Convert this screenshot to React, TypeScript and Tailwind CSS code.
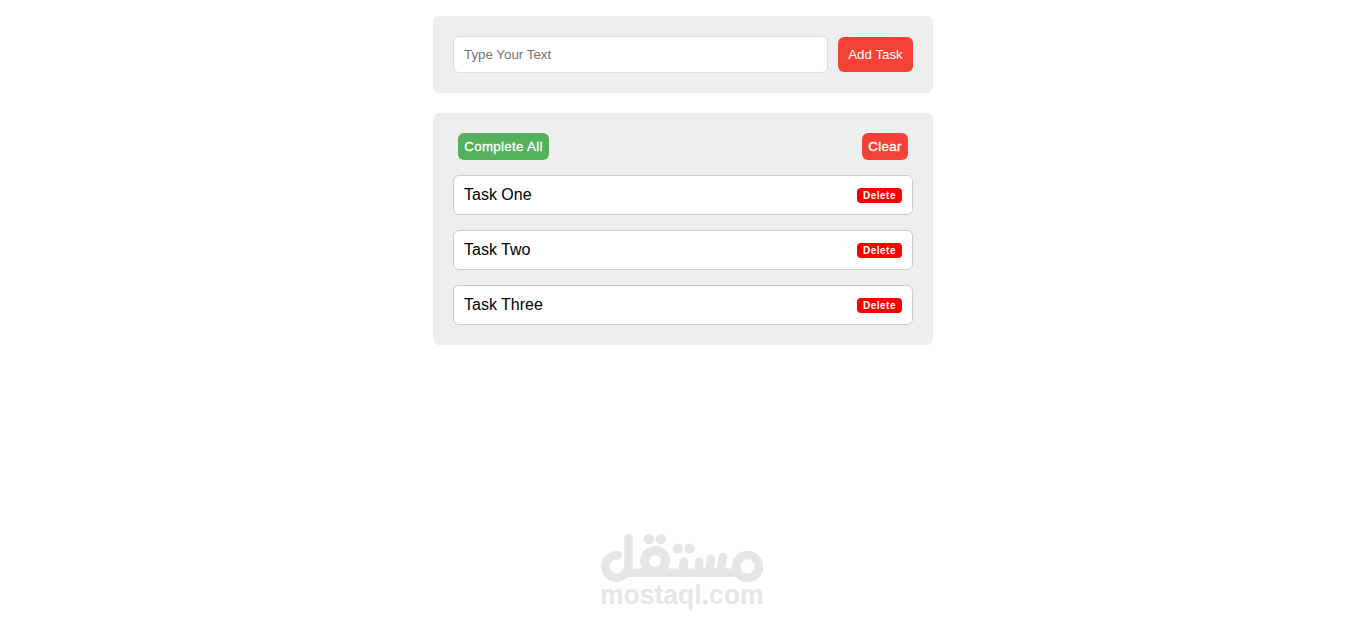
import { useState, FormEvent } from "react";

interface Task {
  id: number;
  title: string;
}

const initialTasks: Task[] = [
  { id: 1, title: "Task One" },
  { id: 2, title: "Task Two" },
  { id: 3, title: "Task Three" },
];

function Watermark() {
  return (
    <svg
      width="166"
      height="80"
      viewBox="0 0 166 80"
      fill="none"
      stroke="#e6e6e6"
      strokeWidth="8.5"
      strokeLinecap="round"
      strokeLinejoin="round"
      aria-label="mostaql.com"
    >
      <path d="M18 25.300A11.300 11.300 0 1 0 26.500 42Q28.500 39.500 28.500 35V8.300" />
      <path d="M28.500 42.800H138" />
      <circle cx="55" cy="31" r="10.500" strokeWidth="9" />
      <circle cx="147.600" cy="36.500" r="11.400" />
      <path d="M84 31.500L82.500 43M99.300 31.500L98.300 43M111 29L109 43M122.700 27L120.500 43" />
      <g fill="#e6e6e6" stroke="none">
        <circle cx="49" cy="9" r="5.200" />
        <circle cx="60.800" cy="9" r="5.200" />
        <circle cx="77.700" cy="18.700" r="5.100" />
        <circle cx="89.500" cy="18.700" r="5.100" />
        <text
          x="0"
          y="73.700"
          fontSize="27"
          fontWeight="700"
          textLength="163.500"
          lengthAdjust="spacingAndGlyphs"
          className="font-['Liberation_Sans',Arial,sans-serif]"
        >
          mostaql.com
        </text>
      </g>
    </svg>
  );
}

export default function App() {
  const [tasks, setTasks] = useState<Task[]>(initialTasks);
  const [completed, setCompleted] = useState<number[]>([]);
  const [text, setText] = useState("");

  const handleSubmit = (event: FormEvent) => {
    event.preventDefault();
    if (!text.trim()) {
      return;
    }
    setTasks([...tasks, { id: Date.now(), title: text.trim() }]);
    setText("");
  };

  return (
    <div className="flex min-h-screen flex-col items-center bg-white pt-4 pl-px font-['Liberation_Sans',Arial,sans-serif] text-black">
      <form onSubmit={handleSubmit} className="flex w-[500px] items-center gap-2.5 rounded-md bg-[#eee] p-5">
        <input
          type="text"
          placeholder="Type Your Text"
          value={text}
          onChange={(event) => setText(event.target.value)}
          className="h-[37px] min-w-0 flex-1 rounded-md border border-[#ddd] bg-white px-2.5 text-[13.333px] placeholder:text-[#757575] focus:outline-none"
        />
        <button type="submit" className="h-[35px] w-[75px] rounded-md bg-[#f44336] text-[13.333px] text-white">
          Add Task
        </button>
      </form>

      <div className="mt-5 w-[500px] rounded-md bg-[#eee] p-5">
        <div className="mb-[15px] flex h-[27px] justify-between px-[5px]">
          <button
            type="button"
            onClick={() => setCompleted(tasks.map((task) => task.id))}
            className="w-[91px] rounded-md bg-[#55b05b] text-[13.333px] tracking-[0.3px] whitespace-nowrap text-white [-webkit-text-stroke:0.3px_white]"
          >
            Complete All
          </button>
          <button
            type="button"
            onClick={() => setTasks([])}
            className="w-[46px] rounded-md bg-[#f44336] text-[13.333px] tracking-[0.3px] text-white [-webkit-text-stroke:0.3px_white]"
          >
            Clear
          </button>
        </div>
        <div className="flex flex-col gap-[15px]">
          {tasks.map((task) => (
            <div
              key={task.id}
              className={`flex h-10 items-center justify-between rounded-md border border-[#ccc] bg-white px-2.5 text-base ${
                completed.includes(task.id) ? "line-through opacity-50" : ""
              }`}
            >
              <span>{task.title}</span>
              <button
                type="button"
                onClick={() => setTasks(tasks.filter((item) => item.id !== task.id))}
                className="h-[15px] w-[45px] rounded bg-[#f00] text-[10px] leading-[15px] font-bold tracking-[0.5px] text-white"
              >
                Delete
              </button>
            </div>
          ))}
        </div>
      </div>

      <div className="mt-auto mb-[11px]">
        <Watermark />
      </div>
    </div>
  );
}
